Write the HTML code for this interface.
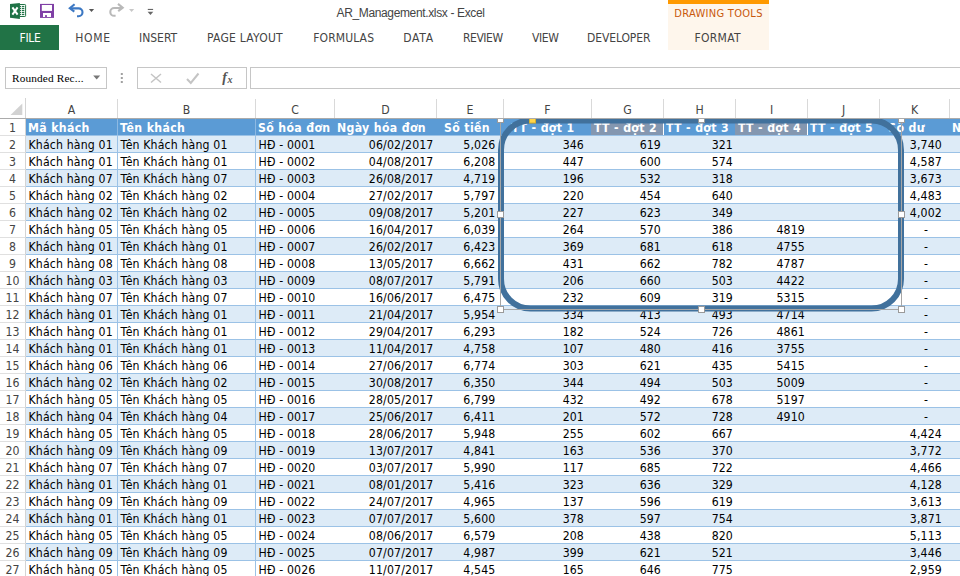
<!DOCTYPE html>
<html lang="vi"><head><meta charset="utf-8"><title>AR_Management.xlsx - Excel</title>
<style>
html,body{margin:0;padding:0;}
body{width:960px;height:576px;overflow:hidden;background:#fff;position:relative;font-family:"DejaVu Sans","Liberation Sans",sans-serif;}
#top{position:absolute;left:0;top:0;width:960px;height:98px;background:#fff;}
#top .abs{position:absolute;}
.tab{position:absolute;top:30px;height:16px;line-height:16px;font:12px/16px "DejaVu Sans Condensed","Liberation Sans",sans-serif;color:#444;white-space:nowrap;}
#file{position:absolute;left:0;top:25px;width:59px;height:25px;background:#217346;}
#file span{position:absolute;left:19.5px;top:5px;font:12px/16px "DejaVu Sans Condensed","Liberation Sans",sans-serif;color:#fff;letter-spacing:-0.3px;}
#title{position:absolute;left:336.5px;top:5px;font:12px/16px "Liberation Sans",sans-serif;letter-spacing:-0.36px;color:#444;white-space:nowrap;}
#dt{position:absolute;left:668px;top:0;width:101px;height:50px;background:#fef6ec;border-top:4px solid #ff9900;box-sizing:border-box;}
#dt .t1{position:absolute;left:6.3px;top:3px;font:11px/14px "DejaVu Sans Condensed","Liberation Sans",sans-serif;color:#c8580c;letter-spacing:0.3px;white-space:nowrap;}
#namebox{position:absolute;left:5px;top:67px;width:102px;height:22px;border:1px solid #c6c6c6;box-sizing:border-box;background:#fff;}
#namebox span{position:absolute;left:6px;top:2px;font:11.3px/16px "Liberation Serif",serif;color:#000;letter-spacing:0.14px;white-space:nowrap;}
#fbtn{position:absolute;left:137px;top:67px;width:110px;height:22px;border:1px solid #c6c6c6;box-sizing:border-box;background:#fff;}
#fbar{position:absolute;left:250px;top:67px;width:720px;height:22px;border:1px solid #c6c6c6;box-sizing:border-box;background:#fff;}
#colhead{position:absolute;left:0;top:98px;width:960px;height:20px;background:#fff;border-bottom:1px solid #ababab;}
.ch{position:absolute;top:1px;height:19px;box-sizing:border-box;border-right:1px solid #d9d9d9;text-align:center;font:12.2px/23px "DejaVu Sans Condensed","DejaVu Sans","Liberation Sans",sans-serif;color:#444;}
#grid{position:absolute;left:0;top:119px;width:960px;height:457px;overflow:hidden;}
.row{position:relative;height:17px;width:1022px;box-sizing:border-box;border-bottom:1px solid #9bc2e6;background:#fff;font:12.2px/19px "DejaVu Sans Condensed","DejaVu Sans","Liberation Sans",sans-serif;letter-spacing:0.15px;color:#000;white-space:nowrap;}
.row.b .c{background:#ddebf7;}
.rn{position:absolute;left:0;top:0;width:25px;height:16px;text-align:center;color:#444;background:#fff;border-right:1px solid #d4d4d4;border-bottom:1px solid #e0e0e0;box-sizing:content-box;}
.c{position:absolute;top:0;height:16px;box-sizing:border-box;overflow:visible;}
.c.v{border-right:1px solid #9bc2e6;}
.c.l{padding-left:2.5px;}
.c.r{text-align:right;padding-right:3px;}
.c.a{text-align:right;padding-right:8px;}
.c.r.x{padding-right:3.5px;}
.c.a.x{padding-right:8.5px;}
.c.d{text-align:right;padding-right:22px;}
.row.hd .c{background:#5b9bd5;color:#fff;font-weight:bold;letter-spacing:0.35px;}
.row.hd .c.v{border-right-color:#8db9e2;}
.row.hd .c.g{background:#8497b0;}
.row.hd .c span{position:absolute;top:0;}
.rn{line-height:19px;}
#selall{position:absolute;left:0;top:0;width:25px;height:20px;border-right:1px solid #d4d4d4;}
</style></head>
<body>
<div id="top">
<svg class="abs" style="left:0;top:0" width="180" height="24" viewBox="0 0 180 24">
<!-- excel logo -->
<rect x="19" y="4.5" width="6.6" height="12" rx="0.8" fill="#fff" stroke="#217346" stroke-width="1"/>
<g fill="#217346"><rect x="20" y="5.9" width="1.2" height="1.2"/><rect x="22" y="5.9" width="2.3" height="1.2"/><rect x="20" y="7.9" width="1.2" height="1.2"/><rect x="22" y="7.9" width="2.3" height="1.2"/><rect x="20" y="9.9" width="1.2" height="1.2"/><rect x="22" y="9.9" width="2.3" height="1.2"/><rect x="20" y="11.9" width="1.2" height="1.2"/><rect x="22" y="11.9" width="2.3" height="1.2"/><rect x="20" y="13.9" width="1.2" height="1.2"/><rect x="22" y="13.9" width="2.3" height="1.2"/></g>
<polygon points="10,4.1 19.9,3 19.9,18.9 10,17.8" fill="#1f7246"/>
<path d="M12.4 7.4 L17.6 14.6 M17.6 7.4 L12.4 14.6" stroke="#fff" stroke-width="2" fill="none"/>
<!-- save -->
<rect x="40" y="3.9" width="14" height="14" fill="#8040a6"/>
<rect x="41.8" y="5" width="10.2" height="5.9" fill="#fff"/>
<rect x="43" y="13" width="8" height="4" fill="#fff"/>
<rect x="45.1" y="15.1" width="1.8" height="1.9" fill="#8040a6"/>
<!-- undo -->
<path d="M70.5 8.4 H78.6 a3.9 3.9 0 0 1 0 7.8 H77" stroke="#3c78c3" stroke-width="2.1" fill="none"/>
<path d="M74.6 4.3 L69.8 8.2 L74.3 11.6" stroke="#3c78c3" stroke-width="2.1" fill="none"/>
<polygon points="88.9,9 94.1,9 91.5,11.9" fill="#555"/>
<!-- redo -->
<path d="M122 8 H114.2 a3.9 3.9 0 0 0 0 7.8 H115.6" stroke="#b9b9b9" stroke-width="2.1" fill="none"/>
<path d="M118 3.9 L122.7 7.7 L118.2 11.2" stroke="#b9b9b9" stroke-width="2.1" fill="none"/>
<polygon points="129,9 134.2,9 131.6,11.9" fill="#c8c8c8"/>
<!-- customize -->
<rect x="147.8" y="8.9" width="5.3" height="1.1" fill="#666"/>
<polygon points="147.6,11.8 153.3,11.8 150.45,15" fill="#666"/>
</svg>
<div id="file"><span>FILE</span></div>
<div id="title">AR_Management.xlsx - Excel</div>
<div id="dt"><div class="t1">DRAWING TOOLS</div></div>
<div class="tab" style="left:75.3px;letter-spacing:0.65px">HOME</div>
<div class="tab" style="left:139px">INSERT</div>
<div class="tab" style="left:207px;letter-spacing:0.25px">PAGE LAYOUT</div>
<div class="tab" style="left:313.2px;letter-spacing:0.12px">FORMULAS</div>
<div class="tab" style="left:403.2px;letter-spacing:0.8px">DATA</div>
<div class="tab" style="left:463px;letter-spacing:-0.45px">REVIEW</div>
<div class="tab" style="left:532px;letter-spacing:-0.4px">VIEW</div>
<div class="tab" style="left:587px;letter-spacing:-0.1px">DEVELOPER</div>
<div class="tab" style="left:694.5px;letter-spacing:0.3px">FORMAT</div>
<div id="namebox"><span>Rounded Rec...</span>
<svg style="position:absolute;left:86px;top:7px" width="10" height="6" viewBox="0 0 10 6"><polygon points="1.2,0.6 8.2,0.6 4.7,4.4" fill="#777"/></svg></div>
<svg class="abs" style="left:119px;top:70px" width="6" height="16" viewBox="0 0 6 16"><g fill="#a0a0a0"><rect x="1.8" y="3" width="2" height="2"/><rect x="1.8" y="7" width="2" height="2"/><rect x="1.8" y="11" width="2" height="2"/></g></svg>
<div id="fbtn">
<svg style="position:absolute;left:0;top:0" width="108" height="20" viewBox="138 68 108 20">
<path d="M151 74 L161 82.5 M161 74 L151 82.5" stroke="#c4c4c4" stroke-width="1.5" fill="none"/>
<path d="M187 79 L190.8 83 L198.5 73.5" stroke="#c4c4c4" stroke-width="2" fill="none"/>
<text x="222.3" y="82.3" font-family="Liberation Serif, serif" font-style="italic" font-weight="bold" font-size="14" fill="#555">f</text>
<text x="227.6" y="83.2" font-family="Liberation Serif, serif" font-style="italic" font-weight="bold" font-size="10" fill="#555">x</text>
</svg>
</div>
<div id="fbar"></div>
</div>
<div id="colhead">
<div id="selall"><svg width="25" height="20" viewBox="0 0 25 20"><polygon points="22.3,5.5 22.3,17 10.5,17" fill="#d2d2d2"/></svg></div>
<div class="ch" style="left:26px;width:92px">A</div><div class="ch" style="left:118px;width:138px">B</div><div class="ch" style="left:256px;width:79px">C</div><div class="ch" style="left:335px;width:102px">D</div><div class="ch" style="left:437px;width:67px">E</div><div class="ch" style="left:504px;width:88px">F</div><div class="ch" style="left:592px;width:72px">G</div><div class="ch" style="left:664px;width:72px">H</div><div class="ch" style="left:736px;width:72px">I</div><div class="ch" style="left:808px;width:72px">J</div><div class="ch" style="left:880px;width:70px">K</div><div class="ch" style="left:950px;width:72px">L</div>
</div>
<div id="grid">
<div class="row hd"><div class="rn">1</div><div class="c h v" style="left:26px;width:92px"><span style="left:2px">Mã khách</span></div><div class="c h v" style="left:118px;width:138px"><span style="left:2px">Tên khách</span></div><div class="c h" style="left:256px;width:79px"><span style="left:2px">Số hóa đơn</span></div><div class="c h" style="left:335px;width:102px"><span style="left:2px">Ngày hóa đơn</span></div><div class="c h" style="left:437px;width:67px"><span style="left:7px">Số tiền</span></div><div class="c h" style="left:504px;width:88px"><span style="left:7.5px">TT - đợt 1</span></div><div class="c h g" style="left:591px;width:72px"><span style="left:3px">TT - đợt 2</span></div><div class="c h" style="left:664px;width:72px"><span style="left:2px">TT - đợt 3</span></div><div class="c h g" style="left:735px;width:72px"><span style="left:3px">TT - đợt 4</span></div><div class="c h" style="left:808px;width:72px"><span style="left:2px">TT - đợt 5</span></div><div class="c h" style="left:880px;width:70px"><span style="left:8.299999999999955px">Số dư</span></div><div class="c h" style="left:950px;width:72px"><span style="left:2px">Ngày</span></div></div>
<div class="row b"><div class="rn">2</div><div class="c l v" style="left:26px;width:92px">Khách hàng 01</div><div class="c l v" style="left:118px;width:138px">Tên Khách hàng 01</div><div class="c l" style="left:256px;width:79px">HĐ - 0001</div><div class="c r x" style="left:335px;width:102px">06/02/2017</div><div class="c a x" style="left:437px;width:67px">5,026</div><div class="c a" style="left:504px;width:88px">346</div><div class="c r" style="left:592px;width:72px">619</div><div class="c r" style="left:664px;width:72px">321</div><div class="c r" style="left:736px;width:72px"></div><div class="c r" style="left:808px;width:72px"></div><div class="c a" style="left:880px;width:70px">3,740</div><div class="c" style="left:950px;width:72px"></div></div>
<div class="row"><div class="rn">3</div><div class="c l v" style="left:26px;width:92px">Khách hàng 01</div><div class="c l v" style="left:118px;width:138px">Tên Khách hàng 01</div><div class="c l" style="left:256px;width:79px">HĐ - 0002</div><div class="c r x" style="left:335px;width:102px">04/08/2017</div><div class="c a x" style="left:437px;width:67px">6,208</div><div class="c a" style="left:504px;width:88px">447</div><div class="c r" style="left:592px;width:72px">600</div><div class="c r" style="left:664px;width:72px">574</div><div class="c r" style="left:736px;width:72px"></div><div class="c r" style="left:808px;width:72px"></div><div class="c a" style="left:880px;width:70px">4,587</div><div class="c" style="left:950px;width:72px"></div></div>
<div class="row b"><div class="rn">4</div><div class="c l v" style="left:26px;width:92px">Khách hàng 07</div><div class="c l v" style="left:118px;width:138px">Tên Khách hàng 07</div><div class="c l" style="left:256px;width:79px">HĐ - 0003</div><div class="c r x" style="left:335px;width:102px">26/08/2017</div><div class="c a x" style="left:437px;width:67px">4,719</div><div class="c a" style="left:504px;width:88px">196</div><div class="c r" style="left:592px;width:72px">532</div><div class="c r" style="left:664px;width:72px">318</div><div class="c r" style="left:736px;width:72px"></div><div class="c r" style="left:808px;width:72px"></div><div class="c a" style="left:880px;width:70px">3,673</div><div class="c" style="left:950px;width:72px"></div></div>
<div class="row"><div class="rn">5</div><div class="c l v" style="left:26px;width:92px">Khách hàng 02</div><div class="c l v" style="left:118px;width:138px">Tên Khách hàng 02</div><div class="c l" style="left:256px;width:79px">HĐ - 0004</div><div class="c r x" style="left:335px;width:102px">27/02/2017</div><div class="c a x" style="left:437px;width:67px">5,797</div><div class="c a" style="left:504px;width:88px">220</div><div class="c r" style="left:592px;width:72px">454</div><div class="c r" style="left:664px;width:72px">640</div><div class="c r" style="left:736px;width:72px"></div><div class="c r" style="left:808px;width:72px"></div><div class="c a" style="left:880px;width:70px">4,483</div><div class="c" style="left:950px;width:72px"></div></div>
<div class="row b"><div class="rn">6</div><div class="c l v" style="left:26px;width:92px">Khách hàng 02</div><div class="c l v" style="left:118px;width:138px">Tên Khách hàng 02</div><div class="c l" style="left:256px;width:79px">HĐ - 0005</div><div class="c r x" style="left:335px;width:102px">09/08/2017</div><div class="c a x" style="left:437px;width:67px">5,201</div><div class="c a" style="left:504px;width:88px">227</div><div class="c r" style="left:592px;width:72px">623</div><div class="c r" style="left:664px;width:72px">349</div><div class="c r" style="left:736px;width:72px"></div><div class="c r" style="left:808px;width:72px"></div><div class="c a" style="left:880px;width:70px">4,002</div><div class="c" style="left:950px;width:72px"></div></div>
<div class="row"><div class="rn">7</div><div class="c l v" style="left:26px;width:92px">Khách hàng 05</div><div class="c l v" style="left:118px;width:138px">Tên Khách hàng 05</div><div class="c l" style="left:256px;width:79px">HĐ - 0006</div><div class="c r x" style="left:335px;width:102px">16/04/2017</div><div class="c a x" style="left:437px;width:67px">6,039</div><div class="c a" style="left:504px;width:88px">264</div><div class="c r" style="left:592px;width:72px">570</div><div class="c r" style="left:664px;width:72px">386</div><div class="c r" style="left:736px;width:72px">4819</div><div class="c r" style="left:808px;width:72px"></div><div class="c d" style="left:880px;width:70px">-</div><div class="c" style="left:950px;width:72px"></div></div>
<div class="row b"><div class="rn">8</div><div class="c l v" style="left:26px;width:92px">Khách hàng 01</div><div class="c l v" style="left:118px;width:138px">Tên Khách hàng 01</div><div class="c l" style="left:256px;width:79px">HĐ - 0007</div><div class="c r x" style="left:335px;width:102px">26/02/2017</div><div class="c a x" style="left:437px;width:67px">6,423</div><div class="c a" style="left:504px;width:88px">369</div><div class="c r" style="left:592px;width:72px">681</div><div class="c r" style="left:664px;width:72px">618</div><div class="c r" style="left:736px;width:72px">4755</div><div class="c r" style="left:808px;width:72px"></div><div class="c d" style="left:880px;width:70px">-</div><div class="c" style="left:950px;width:72px"></div></div>
<div class="row"><div class="rn">9</div><div class="c l v" style="left:26px;width:92px">Khách hàng 08</div><div class="c l v" style="left:118px;width:138px">Tên Khách hàng 08</div><div class="c l" style="left:256px;width:79px">HĐ - 0008</div><div class="c r x" style="left:335px;width:102px">13/05/2017</div><div class="c a x" style="left:437px;width:67px">6,662</div><div class="c a" style="left:504px;width:88px">431</div><div class="c r" style="left:592px;width:72px">662</div><div class="c r" style="left:664px;width:72px">782</div><div class="c r" style="left:736px;width:72px">4787</div><div class="c r" style="left:808px;width:72px"></div><div class="c d" style="left:880px;width:70px">-</div><div class="c" style="left:950px;width:72px"></div></div>
<div class="row b"><div class="rn">10</div><div class="c l v" style="left:26px;width:92px">Khách hàng 03</div><div class="c l v" style="left:118px;width:138px">Tên Khách hàng 03</div><div class="c l" style="left:256px;width:79px">HĐ - 0009</div><div class="c r x" style="left:335px;width:102px">08/07/2017</div><div class="c a x" style="left:437px;width:67px">5,791</div><div class="c a" style="left:504px;width:88px">206</div><div class="c r" style="left:592px;width:72px">660</div><div class="c r" style="left:664px;width:72px">503</div><div class="c r" style="left:736px;width:72px">4422</div><div class="c r" style="left:808px;width:72px"></div><div class="c d" style="left:880px;width:70px">-</div><div class="c" style="left:950px;width:72px"></div></div>
<div class="row"><div class="rn">11</div><div class="c l v" style="left:26px;width:92px">Khách hàng 07</div><div class="c l v" style="left:118px;width:138px">Tên Khách hàng 07</div><div class="c l" style="left:256px;width:79px">HĐ - 0010</div><div class="c r x" style="left:335px;width:102px">16/06/2017</div><div class="c a x" style="left:437px;width:67px">6,475</div><div class="c a" style="left:504px;width:88px">232</div><div class="c r" style="left:592px;width:72px">609</div><div class="c r" style="left:664px;width:72px">319</div><div class="c r" style="left:736px;width:72px">5315</div><div class="c r" style="left:808px;width:72px"></div><div class="c d" style="left:880px;width:70px">-</div><div class="c" style="left:950px;width:72px"></div></div>
<div class="row b"><div class="rn">12</div><div class="c l v" style="left:26px;width:92px">Khách hàng 01</div><div class="c l v" style="left:118px;width:138px">Tên Khách hàng 01</div><div class="c l" style="left:256px;width:79px">HĐ - 0011</div><div class="c r x" style="left:335px;width:102px">21/04/2017</div><div class="c a x" style="left:437px;width:67px">5,954</div><div class="c a" style="left:504px;width:88px">334</div><div class="c r" style="left:592px;width:72px">413</div><div class="c r" style="left:664px;width:72px">493</div><div class="c r" style="left:736px;width:72px">4714</div><div class="c r" style="left:808px;width:72px"></div><div class="c d" style="left:880px;width:70px">-</div><div class="c" style="left:950px;width:72px"></div></div>
<div class="row"><div class="rn">13</div><div class="c l v" style="left:26px;width:92px">Khách hàng 01</div><div class="c l v" style="left:118px;width:138px">Tên Khách hàng 01</div><div class="c l" style="left:256px;width:79px">HĐ - 0012</div><div class="c r x" style="left:335px;width:102px">29/04/2017</div><div class="c a x" style="left:437px;width:67px">6,293</div><div class="c a" style="left:504px;width:88px">182</div><div class="c r" style="left:592px;width:72px">524</div><div class="c r" style="left:664px;width:72px">726</div><div class="c r" style="left:736px;width:72px">4861</div><div class="c r" style="left:808px;width:72px"></div><div class="c d" style="left:880px;width:70px">-</div><div class="c" style="left:950px;width:72px"></div></div>
<div class="row b"><div class="rn">14</div><div class="c l v" style="left:26px;width:92px">Khách hàng 01</div><div class="c l v" style="left:118px;width:138px">Tên Khách hàng 01</div><div class="c l" style="left:256px;width:79px">HĐ - 0013</div><div class="c r x" style="left:335px;width:102px">11/04/2017</div><div class="c a x" style="left:437px;width:67px">4,758</div><div class="c a" style="left:504px;width:88px">107</div><div class="c r" style="left:592px;width:72px">480</div><div class="c r" style="left:664px;width:72px">416</div><div class="c r" style="left:736px;width:72px">3755</div><div class="c r" style="left:808px;width:72px"></div><div class="c d" style="left:880px;width:70px">-</div><div class="c" style="left:950px;width:72px"></div></div>
<div class="row"><div class="rn">15</div><div class="c l v" style="left:26px;width:92px">Khách hàng 06</div><div class="c l v" style="left:118px;width:138px">Tên Khách hàng 06</div><div class="c l" style="left:256px;width:79px">HĐ - 0014</div><div class="c r x" style="left:335px;width:102px">27/06/2017</div><div class="c a x" style="left:437px;width:67px">6,774</div><div class="c a" style="left:504px;width:88px">303</div><div class="c r" style="left:592px;width:72px">621</div><div class="c r" style="left:664px;width:72px">435</div><div class="c r" style="left:736px;width:72px">5415</div><div class="c r" style="left:808px;width:72px"></div><div class="c d" style="left:880px;width:70px">-</div><div class="c" style="left:950px;width:72px"></div></div>
<div class="row b"><div class="rn">16</div><div class="c l v" style="left:26px;width:92px">Khách hàng 02</div><div class="c l v" style="left:118px;width:138px">Tên Khách hàng 02</div><div class="c l" style="left:256px;width:79px">HĐ - 0015</div><div class="c r x" style="left:335px;width:102px">30/08/2017</div><div class="c a x" style="left:437px;width:67px">6,350</div><div class="c a" style="left:504px;width:88px">344</div><div class="c r" style="left:592px;width:72px">494</div><div class="c r" style="left:664px;width:72px">503</div><div class="c r" style="left:736px;width:72px">5009</div><div class="c r" style="left:808px;width:72px"></div><div class="c d" style="left:880px;width:70px">-</div><div class="c" style="left:950px;width:72px"></div></div>
<div class="row"><div class="rn">17</div><div class="c l v" style="left:26px;width:92px">Khách hàng 05</div><div class="c l v" style="left:118px;width:138px">Tên Khách hàng 05</div><div class="c l" style="left:256px;width:79px">HĐ - 0016</div><div class="c r x" style="left:335px;width:102px">28/05/2017</div><div class="c a x" style="left:437px;width:67px">6,799</div><div class="c a" style="left:504px;width:88px">432</div><div class="c r" style="left:592px;width:72px">492</div><div class="c r" style="left:664px;width:72px">678</div><div class="c r" style="left:736px;width:72px">5197</div><div class="c r" style="left:808px;width:72px"></div><div class="c d" style="left:880px;width:70px">-</div><div class="c" style="left:950px;width:72px"></div></div>
<div class="row b"><div class="rn">18</div><div class="c l v" style="left:26px;width:92px">Khách hàng 04</div><div class="c l v" style="left:118px;width:138px">Tên Khách hàng 04</div><div class="c l" style="left:256px;width:79px">HĐ - 0017</div><div class="c r x" style="left:335px;width:102px">25/06/2017</div><div class="c a x" style="left:437px;width:67px">6,411</div><div class="c a" style="left:504px;width:88px">201</div><div class="c r" style="left:592px;width:72px">572</div><div class="c r" style="left:664px;width:72px">728</div><div class="c r" style="left:736px;width:72px">4910</div><div class="c r" style="left:808px;width:72px"></div><div class="c d" style="left:880px;width:70px">-</div><div class="c" style="left:950px;width:72px"></div></div>
<div class="row"><div class="rn">19</div><div class="c l v" style="left:26px;width:92px">Khách hàng 05</div><div class="c l v" style="left:118px;width:138px">Tên Khách hàng 05</div><div class="c l" style="left:256px;width:79px">HĐ - 0018</div><div class="c r x" style="left:335px;width:102px">28/06/2017</div><div class="c a x" style="left:437px;width:67px">5,948</div><div class="c a" style="left:504px;width:88px">255</div><div class="c r" style="left:592px;width:72px">602</div><div class="c r" style="left:664px;width:72px">667</div><div class="c r" style="left:736px;width:72px"></div><div class="c r" style="left:808px;width:72px"></div><div class="c a" style="left:880px;width:70px">4,424</div><div class="c" style="left:950px;width:72px"></div></div>
<div class="row b"><div class="rn">20</div><div class="c l v" style="left:26px;width:92px">Khách hàng 09</div><div class="c l v" style="left:118px;width:138px">Tên Khách hàng 09</div><div class="c l" style="left:256px;width:79px">HĐ - 0019</div><div class="c r x" style="left:335px;width:102px">13/07/2017</div><div class="c a x" style="left:437px;width:67px">4,841</div><div class="c a" style="left:504px;width:88px">163</div><div class="c r" style="left:592px;width:72px">536</div><div class="c r" style="left:664px;width:72px">370</div><div class="c r" style="left:736px;width:72px"></div><div class="c r" style="left:808px;width:72px"></div><div class="c a" style="left:880px;width:70px">3,772</div><div class="c" style="left:950px;width:72px"></div></div>
<div class="row"><div class="rn">21</div><div class="c l v" style="left:26px;width:92px">Khách hàng 07</div><div class="c l v" style="left:118px;width:138px">Tên Khách hàng 07</div><div class="c l" style="left:256px;width:79px">HĐ - 0020</div><div class="c r x" style="left:335px;width:102px">03/07/2017</div><div class="c a x" style="left:437px;width:67px">5,990</div><div class="c a" style="left:504px;width:88px">117</div><div class="c r" style="left:592px;width:72px">685</div><div class="c r" style="left:664px;width:72px">722</div><div class="c r" style="left:736px;width:72px"></div><div class="c r" style="left:808px;width:72px"></div><div class="c a" style="left:880px;width:70px">4,466</div><div class="c" style="left:950px;width:72px"></div></div>
<div class="row b"><div class="rn">22</div><div class="c l v" style="left:26px;width:92px">Khách hàng 01</div><div class="c l v" style="left:118px;width:138px">Tên Khách hàng 01</div><div class="c l" style="left:256px;width:79px">HĐ - 0021</div><div class="c r x" style="left:335px;width:102px">08/01/2017</div><div class="c a x" style="left:437px;width:67px">5,416</div><div class="c a" style="left:504px;width:88px">323</div><div class="c r" style="left:592px;width:72px">636</div><div class="c r" style="left:664px;width:72px">329</div><div class="c r" style="left:736px;width:72px"></div><div class="c r" style="left:808px;width:72px"></div><div class="c a" style="left:880px;width:70px">4,128</div><div class="c" style="left:950px;width:72px"></div></div>
<div class="row"><div class="rn">23</div><div class="c l v" style="left:26px;width:92px">Khách hàng 09</div><div class="c l v" style="left:118px;width:138px">Tên Khách hàng 09</div><div class="c l" style="left:256px;width:79px">HĐ - 0022</div><div class="c r x" style="left:335px;width:102px">24/07/2017</div><div class="c a x" style="left:437px;width:67px">4,965</div><div class="c a" style="left:504px;width:88px">137</div><div class="c r" style="left:592px;width:72px">596</div><div class="c r" style="left:664px;width:72px">619</div><div class="c r" style="left:736px;width:72px"></div><div class="c r" style="left:808px;width:72px"></div><div class="c a" style="left:880px;width:70px">3,613</div><div class="c" style="left:950px;width:72px"></div></div>
<div class="row b"><div class="rn">24</div><div class="c l v" style="left:26px;width:92px">Khách hàng 01</div><div class="c l v" style="left:118px;width:138px">Tên Khách hàng 01</div><div class="c l" style="left:256px;width:79px">HĐ - 0023</div><div class="c r x" style="left:335px;width:102px">07/07/2017</div><div class="c a x" style="left:437px;width:67px">5,600</div><div class="c a" style="left:504px;width:88px">378</div><div class="c r" style="left:592px;width:72px">597</div><div class="c r" style="left:664px;width:72px">754</div><div class="c r" style="left:736px;width:72px"></div><div class="c r" style="left:808px;width:72px"></div><div class="c a" style="left:880px;width:70px">3,871</div><div class="c" style="left:950px;width:72px"></div></div>
<div class="row"><div class="rn">25</div><div class="c l v" style="left:26px;width:92px">Khách hàng 05</div><div class="c l v" style="left:118px;width:138px">Tên Khách hàng 05</div><div class="c l" style="left:256px;width:79px">HĐ - 0024</div><div class="c r x" style="left:335px;width:102px">08/06/2017</div><div class="c a x" style="left:437px;width:67px">6,579</div><div class="c a" style="left:504px;width:88px">208</div><div class="c r" style="left:592px;width:72px">438</div><div class="c r" style="left:664px;width:72px">820</div><div class="c r" style="left:736px;width:72px"></div><div class="c r" style="left:808px;width:72px"></div><div class="c a" style="left:880px;width:70px">5,113</div><div class="c" style="left:950px;width:72px"></div></div>
<div class="row b"><div class="rn">26</div><div class="c l v" style="left:26px;width:92px">Khách hàng 09</div><div class="c l v" style="left:118px;width:138px">Tên Khách hàng 09</div><div class="c l" style="left:256px;width:79px">HĐ - 0025</div><div class="c r x" style="left:335px;width:102px">07/07/2017</div><div class="c a x" style="left:437px;width:67px">4,987</div><div class="c a" style="left:504px;width:88px">399</div><div class="c r" style="left:592px;width:72px">621</div><div class="c r" style="left:664px;width:72px">521</div><div class="c r" style="left:736px;width:72px"></div><div class="c r" style="left:808px;width:72px"></div><div class="c a" style="left:880px;width:70px">3,446</div><div class="c" style="left:950px;width:72px"></div></div>
<div class="row"><div class="rn">27</div><div class="c l v" style="left:26px;width:92px">Khách hàng 05</div><div class="c l v" style="left:118px;width:138px">Tên Khách hàng 05</div><div class="c l" style="left:256px;width:79px">HĐ - 0026</div><div class="c r x" style="left:335px;width:102px">11/07/2017</div><div class="c a x" style="left:437px;width:67px">4,545</div><div class="c a" style="left:504px;width:88px">165</div><div class="c r" style="left:592px;width:72px">646</div><div class="c r" style="left:664px;width:72px">775</div><div class="c r" style="left:736px;width:72px"></div><div class="c r" style="left:808px;width:72px"></div><div class="c a" style="left:880px;width:70px">2,959</div><div class="c" style="left:950px;width:72px"></div></div>
</div>
<svg id="shape" style="position:absolute;left:0;top:119px" width="960" height="457" viewBox="0 119 960 457">
<rect x="501" y="120.4" width="400" height="188.1" rx="29.5" ry="29.5" fill="none" stroke="#41719c" stroke-width="6"/>
<rect x="500.5" y="118.5" width="401" height="191" fill="none" stroke="#a6a6a6" stroke-width="1"/>
<g fill="#fff" stroke="#9a9a9a" stroke-width="1">
<rect x="497.5" y="116.5" width="6" height="6"/><rect x="698.5" y="116.5" width="6" height="6"/><rect x="898.5" y="116.5" width="6" height="6"/>
<rect x="497.5" y="211.5" width="6" height="6"/><rect x="898.5" y="211.5" width="6" height="6"/>
<rect x="497.5" y="306.5" width="6" height="6"/><rect x="698.5" y="306.5" width="6" height="6"/><rect x="898.5" y="306.5" width="6" height="6"/>
</g>
<rect x="529.5" y="117" width="6" height="6" fill="#ffd54a" stroke="#d8b02e" stroke-width="1"/>
</svg>
</body></html>
